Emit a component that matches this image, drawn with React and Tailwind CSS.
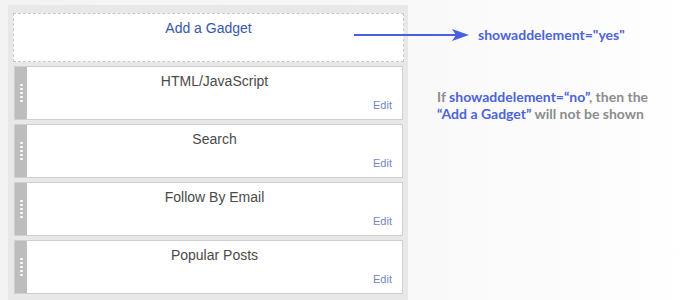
import React from "react";

const gadgets = ["HTML/JavaScript", "Search", "Follow By Email", "Popular Posts"];

function Grip() {
  return (
    <div className="w-[12px] shrink-0 bg-[#bdbdbd] flex flex-col items-center justify-center gap-[2px]">
      {[0, 1, 2, 3, 4].map((i) => (
        <span key={i} className="block w-[3px] h-[2px] bg-white rounded-full" />
      ))}
    </div>
  );
}

export default function App() {
  return (
    <div className="relative w-[700px] h-[300px] overflow-hidden bg-gradient-to-r from-[#f3f3f3] via-[#f7f7f7] to-white font-['Liberation_Sans',Arial,sans-serif]">
      <div className="absolute left-[8px] top-[5px] w-[400px] h-[295px] bg-[#e8e8e8] pl-[5px] pr-[4px] pt-[8px]">
        {/* add gadget slot */}
        <div className="h-[49px] bg-white border border-dashed border-[#c8c8c8] flex justify-center pt-[5px]">
          <span className="text-[14px] text-[#3a57a6] leading-[18px]">Add a Gadget</span>
        </div>

        {/* gadgets */}
        <div className="flex flex-col gap-[4px] mt-[4px] pl-[1px] pr-[1px]">
          {gadgets.map((g) => (
            <div key={g} className="h-[54px] flex border border-[#cfcfcf] bg-white">
              <Grip />
              <div className="flex-1 flex flex-col px-[10px] pt-[5px] pb-[7px]">
                <div className="text-center text-[14px] leading-[18px] text-[#4a4a4a]">{g}</div>
                <div className="mt-auto text-right text-[11px] leading-[14px] text-[#7486c4]">Edit</div>
              </div>
            </div>
          ))}
        </div>
      </div>

      {/* arrow */}
      <svg className="absolute left-[352px] top-[28px]" width="120" height="14" viewBox="0 0 120 14">
        <line x1="2" y1="7" x2="106" y2="7" stroke="#4a5fe0" strokeWidth="2" />
        <path d="M100 1 L117 7 L100 13 L104 7 Z" fill="#4a5fe0" />
      </svg>

      <div className="absolute left-[478px] top-[25px] text-[14px] font-bold leading-[20px] text-[#4d63d8] font-['Lato',sans-serif]">
        showaddelement="yes"
      </div>

      <div className="absolute left-[437px] top-[88px] text-[14px] font-bold leading-[17px] text-[#8c8c8c] font-['Lato',sans-serif]">
        <div>
          If <span className="text-[#4d63d8]">showaddelement=“no”</span>, then the
        </div>
        <div>
          <span className="text-[#4d63d8]">“Add a Gadget”</span> will not be shown
        </div>
      </div>
    </div>
  );
}
